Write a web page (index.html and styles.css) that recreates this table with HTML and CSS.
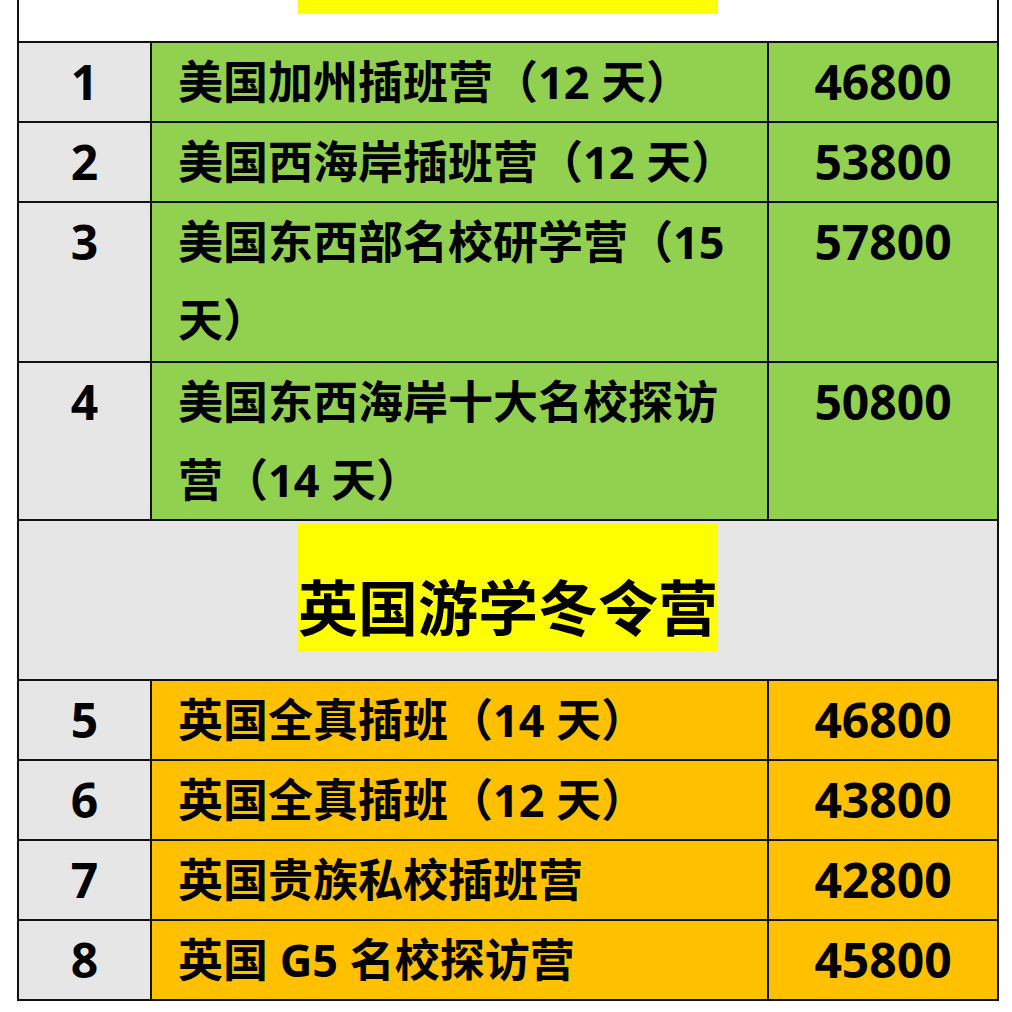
FILE: index.html
```html
<!DOCTYPE html>
<html lang="zh-CN">
<head>
<meta charset="utf-8">
<title>游学冬令营价格表</title>
<link rel="stylesheet" href="styles.css">
</head>
<body>
<table class="sheet">
  <colgroup>
    <col class="c-no">
    <col class="c-name">
    <col class="c-price">
  </colgroup>
  <tr class="sec sec-top">
    <td colspan="3"><div class="tag tag-cut"></div></td>
  </tr>
  <tr class="us">
    <td class="no">1</td>
    <td class="name">美国加州插班营（12 天）</td>
    <td class="price">46800</td>
  </tr>
  <tr class="us">
    <td class="no">2</td>
    <td class="name">美国西海岸插班营（12 天）</td>
    <td class="price">53800</td>
  </tr>
  <tr class="us tall">
    <td class="no">3</td>
    <td class="name">美国东西部名校研学营（15 天）</td>
    <td class="price">57800</td>
  </tr>
  <tr class="us">
    <td class="no">4</td>
    <td class="name">美国东西海岸十大名校探访营（14 天）</td>
    <td class="price">50800</td>
  </tr>
  <tr class="sec">
    <td colspan="3"><div class="tag">英国游学冬令营</div></td>
  </tr>
  <tr class="uk">
    <td class="no">5</td>
    <td class="name">英国全真插班（14 天）</td>
    <td class="price">46800</td>
  </tr>
  <tr class="uk">
    <td class="no">6</td>
    <td class="name">英国全真插班（12 天）</td>
    <td class="price">43800</td>
  </tr>
  <tr class="uk">
    <td class="no">7</td>
    <td class="name">英国贵族私校插班营</td>
    <td class="price">42800</td>
  </tr>
  <tr class="uk">
    <td class="no">8</td>
    <td class="name">英国 G5 名校探访营</td>
    <td class="price">45800</td>
  </tr>
</table>
</body>
</html>
```
FILE: styles.css
```css
html, body {
  margin: 0;
  padding: 0;
  background: #ffffff;
}

.sheet {
  margin-left: 17px;
  width: 980px;
  table-layout: fixed;
  border-collapse: collapse;
  font-family: "Open Sans", "Noto Sans CJK SC", sans-serif;
  font-weight: 700;
  color: #000000;
}

.c-no { width: 133px; }
.c-name { width: 617px; }
.c-price { width: 230px; }

.sheet td {
  border: 2px solid #111111;
  padding: 0;
  vertical-align: top;
}

.sec td {
  background: #e7e6e6;
  padding: 2px 0 28px;
}

.sec-top td {
  background: #ffffff;
  border-top: hidden;
  padding: 0 0 27px;
}

.tag {
  width: fit-content;
  margin: 0 auto;
  background: #ffff00;
  font-family: "Noto Sans CJK SC", sans-serif;
  font-size: 60px;
  line-height: 60px;
  padding: 52px 0 16px;
}

.tag-cut {
  width: 420px;
  height: 14px;
  padding: 0;
}

.no, .price {
  text-align: center;
  font-size: 48px;
  line-height: 78px;
}

.no {
  background: #e7e6e6;
}

.name {
  font-size: 45px;
  line-height: 78px;
  padding: 0 20px 0 26px !important;
}

.tall .name {
  padding-bottom: 2px !important;
}

.us .name, .us .price { background: #92d050; }
.uk .name, .uk .price { background: #ffc000; }
```
